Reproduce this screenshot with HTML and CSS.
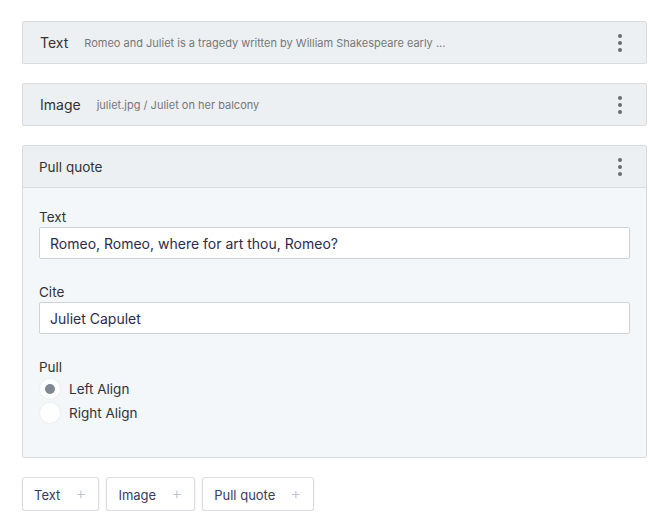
FILE: index.html
```html
<!DOCTYPE html>
<html>
<head>
<meta charset="utf-8">
<link rel="stylesheet" href="styles.css">
</head>
<body>
<div class="list">
  <div class="panel">
    <div class="panel-head">
      <span class="title">Text</span>
      <span class="summary">Romeo and Juliet is a tragedy written by William Shakespeare early ...</span>
      <span class="menu"><i></i><i></i><i></i></span>
    </div>
  </div>
  <div class="panel">
    <div class="panel-head">
      <span class="title">Image</span>
      <span class="summary">juliet.jpg / Juliet on her balcony</span>
      <span class="menu"><i></i><i></i><i></i></span>
    </div>
  </div>
  <div class="panel open">
    <div class="panel-head">
      <span class="title small">Pull quote</span>
      <span class="menu"><i></i><i></i><i></i></span>
    </div>
    <div class="panel-body">
      <div class="field">
        <label class="label">Text</label>
        <div class="input">Romeo, Romeo, where for art thou, Romeo?</div>
      </div>
      <div class="field">
        <label class="label">Cite</label>
        <div class="input">Juliet Capulet</div>
      </div>
      <div class="field">
        <div class="label">Pull</div>
        <div class="radio-row"><span class="radio checked"></span><span>Left Align</span></div>
        <div class="radio-row"><span class="radio"></span><span>Right Align</span></div>
      </div>
    </div>
  </div>
</div>
<div class="buttons">
  <button class="add">Text<span class="plus">+</span></button>
  <button class="add">Image<span class="plus">+</span></button>
  <button class="add">Pull quote<span class="plus">+</span></button>
</div>
</body>
</html>
```
FILE: styles.css
```css
html, body {
  margin: 0;
  background: #fff;
}
body {
  padding: 21px 23px 0 22px;
  font-family: Inter, "Noto Sans", sans-serif;
  color: #333;
}
.list {
  display: flex;
  flex-direction: column;
  gap: 19px;
}
.panel {
  border: 1px solid #d9dcdf;
  border-radius: 2px;
  background: #edf0f3;
}
.panel-head {
  height: 41px;
  display: flex;
  align-items: center;
  padding: 0 16px 0 17px;
}
.open .panel-head {
  border-bottom: 1px solid #d9dcdf;
  padding-left: 16px;
}
.title {
  font-size: 14px;
  color: #333;
}
.title.small {
  font-size: 13.5px;
}
.summary {
  font-size: 11px;
  color: #777;
  margin-left: 16px;
}
.menu {
  margin-left: auto;
  display: flex;
  flex-direction: column;
  gap: 3px;
  margin-right: 8px;
}
.menu i {
  width: 4px;
  height: 4px;
  border-radius: 50%;
  background: #6b6b6b;
}
.panel-body {
  background: #f4f7fa;
  padding: 21px 16px 32px 16px;
}
.field {
  margin-bottom: 25px;
}
.field:last-child {
  margin-bottom: 0;
}
.label {
  display: block;
  font-size: 13.5px;
  color: #333;
  margin-bottom: 1px;
  line-height: 17px;
}
.input {
  height: 30px;
  border: 1px solid #cfd3d6;
  border-radius: 2px;
  background: #fff;
  box-sizing: content-box;
  padding: 0 10px;
  display: flex;
  align-items: center;
  font-size: 14px;
  color: #2c2c4a;
}
.radio-row {
  display: flex;
  align-items: center;
  height: 24px;
  font-size: 13.5px;
  color: #333;
}
.radio {
  width: 20px;
  height: 20px;
  border-radius: 50%;
  background: #fff;
  box-shadow: 0 0 0 1px #eef0f2;
  margin-left: 1px;
  margin-right: 9px;
  display: flex;
  align-items: center;
  justify-content: center;
}
.radio.checked::after {
  content: "";
  width: 10px;
  height: 10px;
  border-radius: 50%;
  background: #7d8891;
}
.buttons {
  display: flex;
  gap: 7px;
  margin-top: 19px;
}
.add {
  height: 34px;
  margin: 0;
  display: flex;
  align-items: center;
  background: #fff;
  border: 1px solid #dcdde2;
  border-radius: 3px;
  box-shadow: 0 1px 2px rgba(0,0,0,0.12);
  padding: 3px 12px 0 11px;
  font-family: Inter, "Noto Sans", sans-serif;
  font-size: 13px;
  line-height: 1;
  color: #3a3a5e;
}
.plus {
  color: #c4c4cc;
  font-size: 17px;
  font-weight: 300;
  margin-left: 15px;
  position: relative;
  top: -2px;
}
```
